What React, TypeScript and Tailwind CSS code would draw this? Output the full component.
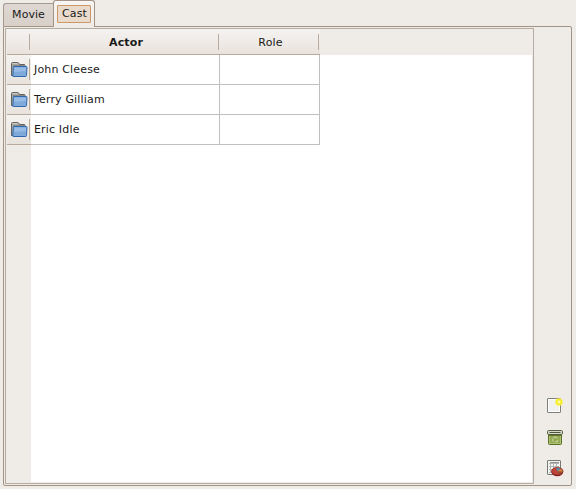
import type { ReactNode } from "react";

function FolderIcon() {
  return (
    <svg width="18" height="17" viewBox="0 0 18 17" className="block">
      <path d="M1.5 14.5V2.5q0-1 1-1h5q1 0 1.5 1l.5 1H14q1 0 1 1v10z" fill="#a8a8a4" stroke="#62625f" />
      <path d="M2.5 2.5h5" stroke="#ccccca" />
      <path d="M3 4.5h11" stroke="#8a8a87" />
      <path d="M1.5 14l1.5 1.5" stroke="#2f68ad" />
      <path d="M4 5.5h12.3q.7 0 .7.7l-.5 8.4q-.1.9-.9.9H3.7q-.8 0-.8-.9l.4-8.4q0-.7.7-.7z" fill="#7ea9da" stroke="#2f68ad" />
      <path d="M4.3 6.5h11.7l-.3 3.5-11.6 1z" fill="#98bce5" />
    </svg>
  );
}

function NewIcon() {
  return (
    <svg width="18" height="18" viewBox="0 0 18 18" className="block">
      <rect x="1.5" y="2.5" width="13" height="14" rx=".5" fill="#f1f1f1" stroke="#7d7f7a" />
      <rect x="2.5" y="3.5" width="11" height="12" fill="none" stroke="#fff" />
      <circle cx="13" cy="6" r="4.3" fill="#f5ed62" fillOpacity=".55" />
      <circle cx="13" cy="6" r="3.2" fill="#f7ef26" />
      <circle cx="13" cy="6" r="1.4" fill="#fffcb0" />
    </svg>
  );
}

function TrashIcon() {
  return (
    <svg width="18" height="18" viewBox="0 0 18 18" className="block">
      <path d="M2.5 6h13v9.5q0 1-1 1h-11q-1 0-1-1z" fill="#94a954" stroke="#5c7028" />
      <path d="M3.5 8v7.5h11V8" fill="none" stroke="#b0c274" />
      <rect x="1.5" y="2.5" width="15" height="4" rx="1.2" fill="#d3d6c8" stroke="#555f40" />
      <path d="M3.5 4.5h11" stroke="#4f563f" />
      <path d="M3 7.5h12" stroke="#61752d" />
      <path d="M7 10.5l1.4-1.6h1.8l1 1.5M12 11.8l-.9 2H9.3M7.8 13.8l-1.3-1.5.6-1.2" fill="none" stroke="#d3dfa8" />
    </svg>
  );
}

function ReportIcon() {
  return (
    <svg width="18" height="18" viewBox="0 0 18 18" className="block">
      <rect x="1.5" y="1.5" width="13" height="14" rx=".5" fill="#f5f5f4" stroke="#777974" />
      <path d="M3 4.5h10M3 7.5h10M3 10.5h10M3 13.5h10M4.5 3v11M7.5 3v11M10.5 3v11" stroke="#b5b7b3" />
      <path d="M4 3.5h9" stroke="#90928e" />
      <ellipse cx="11.3" cy="13.1" rx="5.9" ry="4.2" fill="#861e19" />
      <ellipse cx="11.3" cy="12.2" rx="5.7" ry="3.8" fill="#bd4437" stroke="#8e2b25" strokeWidth=".8" />
      <path d="M11.3 12.4l-1-3.4q3-.4 4.5.9z" fill="#568fb0" />
      <path d="M11.3 12.4l3.5-2.5q2 1 1.7 2.9z" fill="#d28b37" />
      <path d="M11.3 12.4l5.1.4q-.7 1.8-3.5 2.3z" fill="#8d5034" />
    </svg>
  );
}

function HeaderCell({ width, children }: { width: string; children?: ReactNode }) {
  return (
    <div className={`flex ${width} h-[26px] shrink-0 border-b border-[#b8ab9c] bg-linear-to-b from-[#f4f2f0] via-[#efebe7] to-[#e8e2dc] pb-[4px] pt-[5px]`}>
      <div className="flex flex-1 items-center justify-center border-r border-[#b8ab9c] pl-[3px] pt-px leading-4">{children}</div>
      <div className="w-px" />
    </div>
  );
}

function Row({ name }: { name: string }) {
  return (
    <div className="flex h-[30px]">
      <div className="flex w-6 items-center border-b border-[#b8ab9c] bg-linear-to-b from-[#f4f2f0] via-[#efebe7] to-[#e8e2dc] pl-[3px]">
        <div className="flex h-[21px] w-[20px] items-center border-r border-[#b8ab9c]">
          <FolderIcon />
        </div>
        <div className="w-px" />
      </div>
      <div className="w-[189px] border-b border-r border-[#c0c0be] pl-[3px] pt-[7px] leading-4">{name}</div>
      <div className="w-[100px] border-b border-r border-[#c0c0be]" />
    </div>
  );
}

export default function App() {
  return (
    <div className="flex h-[489px] w-[576px] flex-col overflow-hidden bg-[#efebe7] pl-[3px] font-['DejaVu_Sans',sans-serif] text-[11px] tracking-[0.16px] text-[#1a1a1a]">
      <div className="z-10 flex h-[27px] items-start">
        <div className="mt-[3px] flex h-[23px] w-[50px] justify-center rounded-tl-[3px] border-l border-t border-[#a59a90] bg-linear-to-b from-[#ded8d2] to-[#d8d0c9] pt-[3px] leading-4 tracking-[0.05px]">
          Movie
        </div>
        <div className="flex h-[27px] w-[42px] justify-center rounded-t-[3px] border-x border-t border-[#a39485] bg-linear-to-b from-[#f8f6f4] to-[#efebe7] pt-1">
          <div className="h-[18px] w-[34px] rounded-[1px] border border-[#cc9966] bg-[#eadacb] pl-px text-center leading-4">Cast</div>
        </div>
      </div>
      <div className="-mt-px flex h-[460px] w-[569px] rounded-b-[2px] rounded-tr-[2px] border border-[#a39485] p-px">
        <div className="flex h-[456px] w-[529px] flex-col border border-[#b5aca3] px-px pb-px">
          <div className="flex h-[26px]">
            <HeaderCell width="w-6" />
            <HeaderCell width="w-[189px]"><b>Actor</b></HeaderCell>
            <HeaderCell width="w-[100px]">Role</HeaderCell>
          </div>
          <div className="flex-1 bg-linear-to-r from-[#efebe7] from-[24px] to-white to-[24px]">
            <Row name="John Cleese" />
            <Row name="Terry Gilliam" />
            <Row name="Eric Idle" />
          </div>
        </div>
        <div className="flex flex-1 flex-col items-center justify-end gap-[13px] pb-[7px] pl-[5px]">
          <div className="pb-px"><NewIcon /></div>
          <TrashIcon />
          <ReportIcon />
        </div>
      </div>
    </div>
  );
}
